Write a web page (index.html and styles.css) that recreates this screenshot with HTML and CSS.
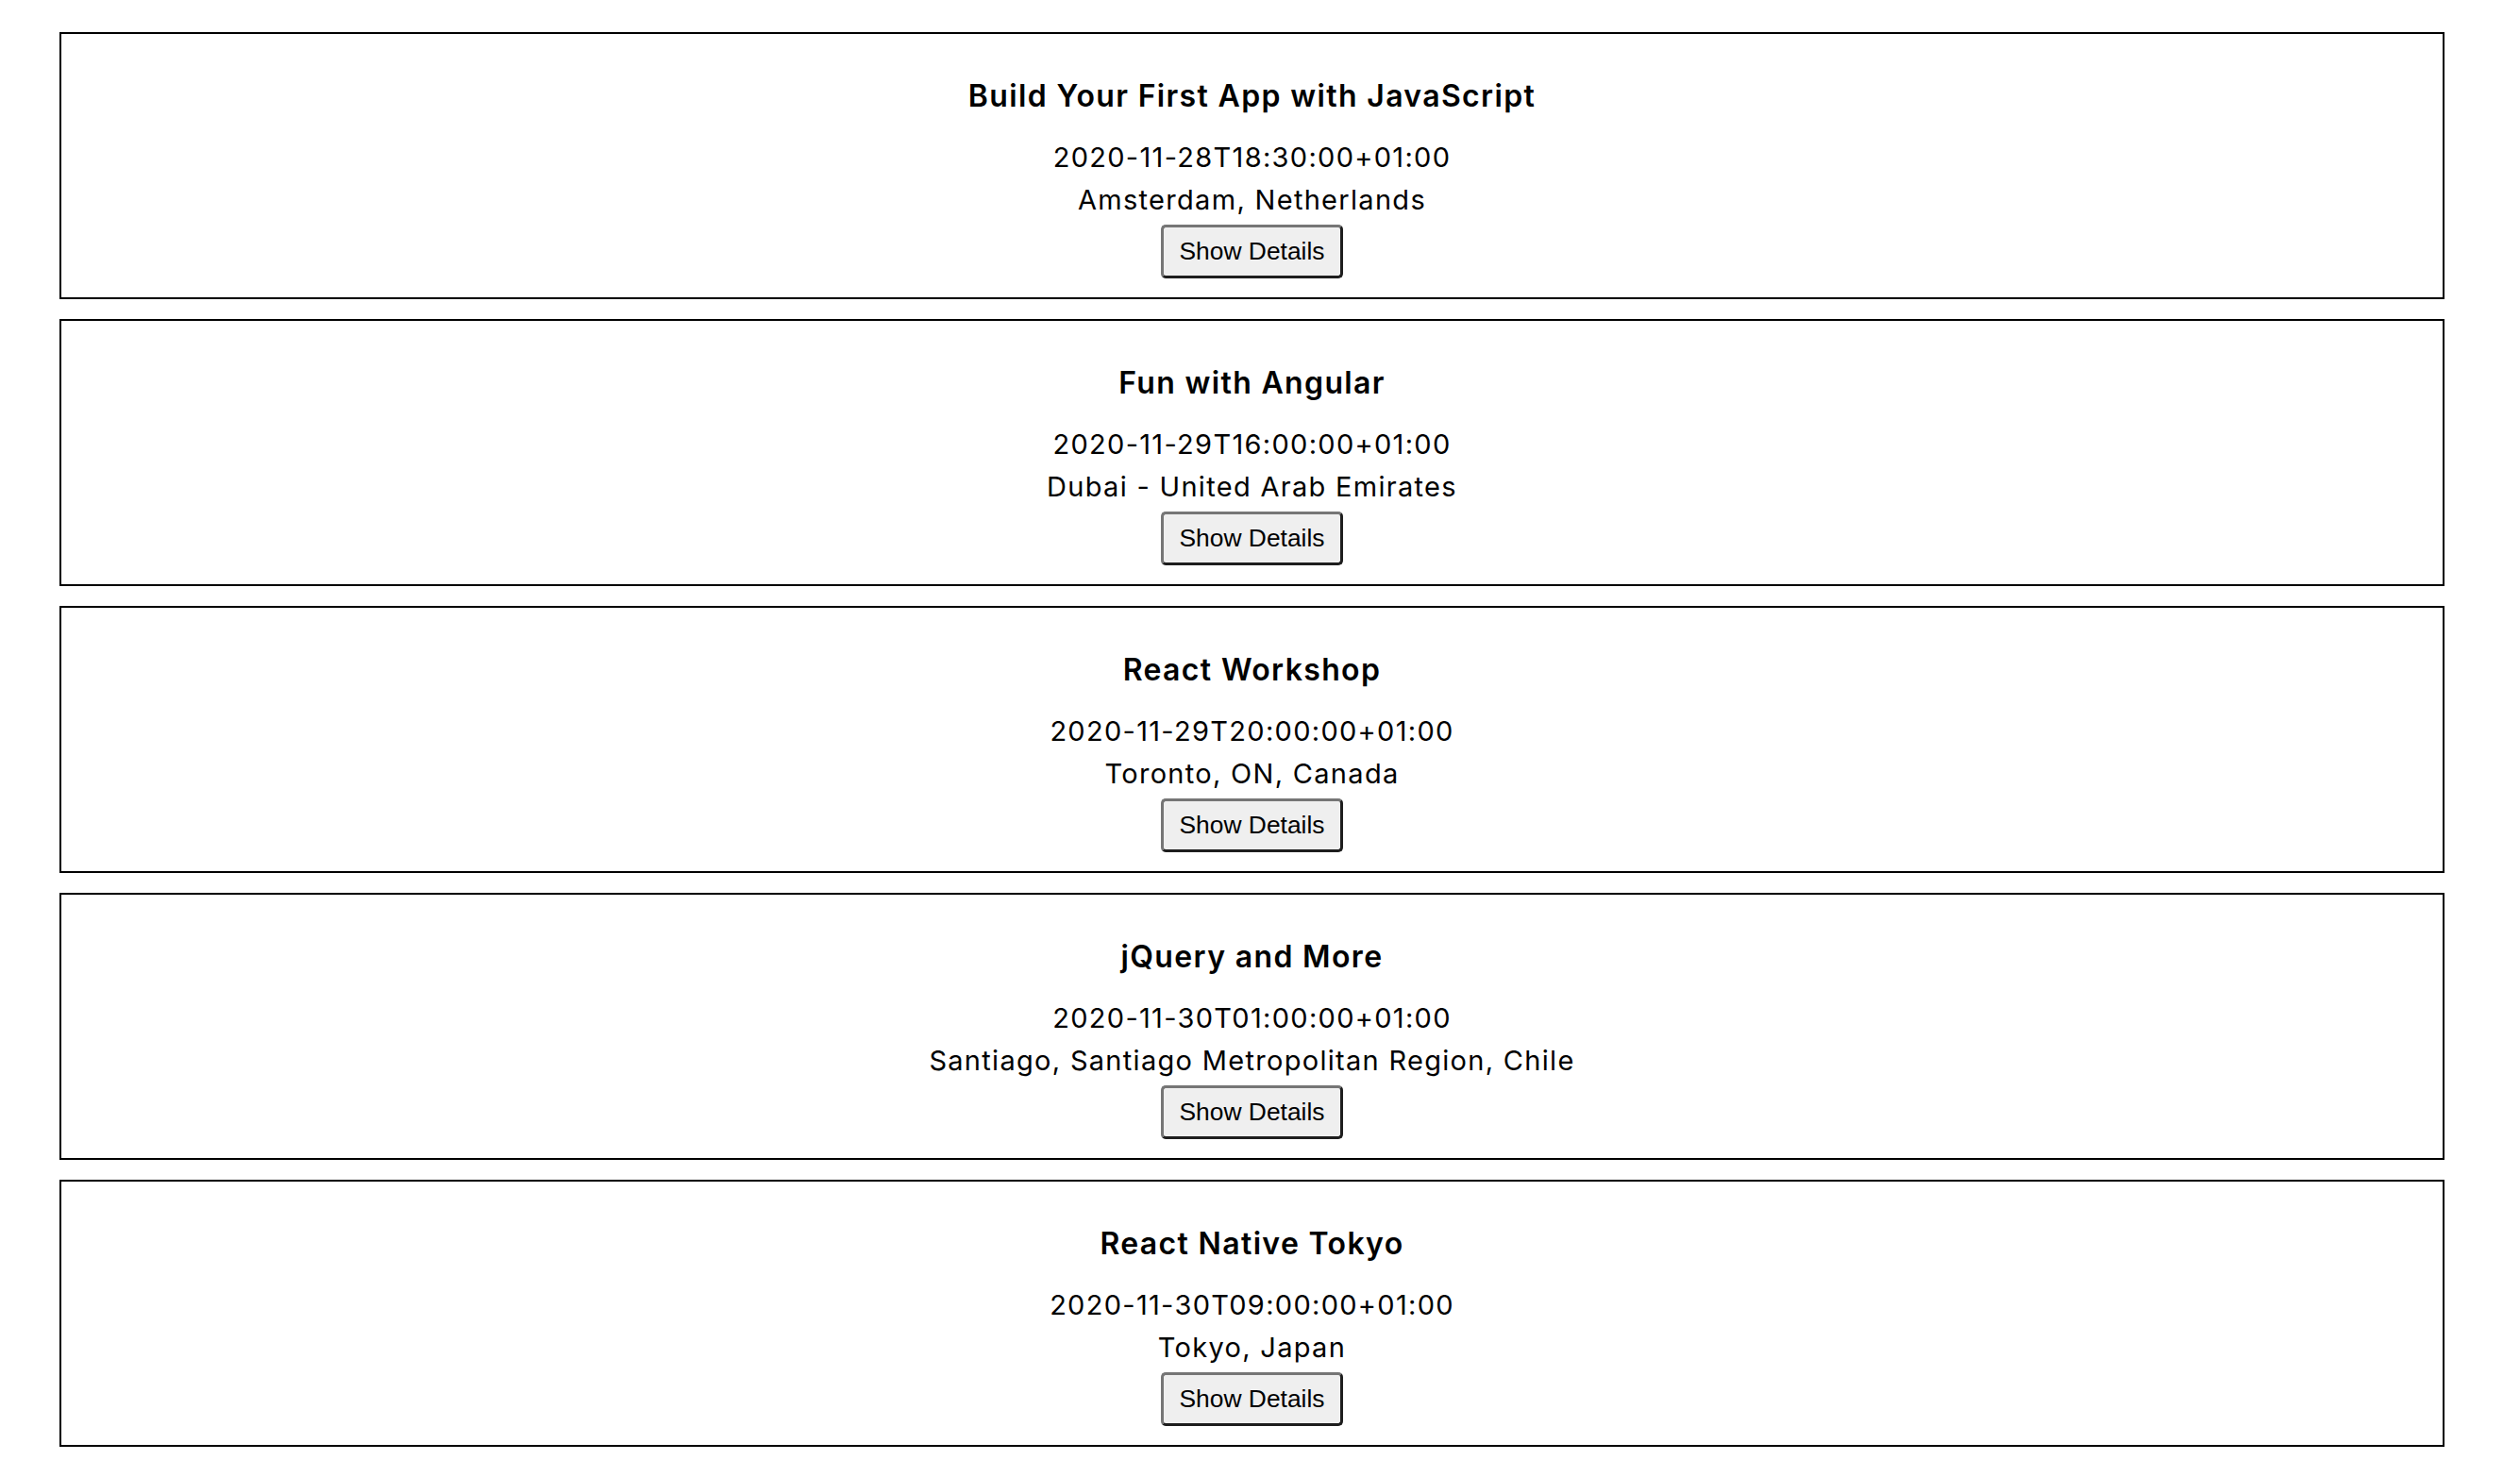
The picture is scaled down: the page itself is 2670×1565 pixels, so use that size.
FILE: index.html
```html
<!DOCTYPE html>
<html lang="en">
<head>
    <meta charset="UTF-8">
    <meta name="viewport" content="width=device-width, initial-scale=1.0">
    <title>Events</title>
    <link rel="stylesheet" href="styles.css">
</head>
<body>
    <div class="events">
        <div class="event">
            <h3 class="event-title">Build Your First App with JavaScript</h3>
            <div class="event-line">2020-11-28T18:30:00+01:00</div>
            <div class="event-line">Amsterdam, Netherlands</div>
            <button type="button" class="details-btn">Show Details</button>
        </div>
        <div class="event">
            <h3 class="event-title">Fun with Angular</h3>
            <div class="event-line">2020-11-29T16:00:00+01:00</div>
            <div class="event-line">Dubai - United Arab Emirates</div>
            <button type="button" class="details-btn">Show Details</button>
        </div>
        <div class="event">
            <h3 class="event-title">React Workshop</h3>
            <div class="event-line">2020-11-29T20:00:00+01:00</div>
            <div class="event-line">Toronto, ON, Canada</div>
            <button type="button" class="details-btn">Show Details</button>
        </div>
        <div class="event">
            <h3 class="event-title">jQuery and More</h3>
            <div class="event-line">2020-11-30T01:00:00+01:00</div>
            <div class="event-line">Santiago, Santiago Metropolitan Region, Chile</div>
            <button type="button" class="details-btn">Show Details</button>
        </div>
        <div class="event">
            <h3 class="event-title">React Native Tokyo</h3>
            <div class="event-line">2020-11-30T09:00:00+01:00</div>
            <div class="event-line">Tokyo, Japan</div>
            <button type="button" class="details-btn">Show Details</button>
        </div>
    </div>
</body>
</html>
```

FILE: styles.css
```css
body {
    font-family: Inter, "Noto Sans", sans-serif;
    color: #000;
    background-color: #fff;
    margin: 0;
    padding: 0;
}

.events {
    display: flex;
    flex-direction: column;
    gap: 21px;
    padding: 34px 80px 0 63px;
}

.event {
    display: flex;
    flex-direction: column;
    align-items: center;
    text-align: center;
    border: 2px solid #000;
    padding: 46px 0 20px;
}

.event-title {
    font-size: 32px;
    font-weight: 600;
    letter-spacing: 1.35px;
    line-height: 40px;
    margin: 0 0 22px;
}

.event-line {
    font-size: 29px;
    letter-spacing: 1.3px;
    line-height: 45px;
}

.details-btn {
    font-family: "Liberation Sans", Arial, sans-serif;
    font-size: 26.4px;
    line-height: 31px;
    color: #000;
    background-color: #efefef;
    margin-top: 4px;
    padding: 10px 16.5px;
    border: 3px solid;
    border-color: #767676 #1e1e1e #1e1e1e #767676;
    border-radius: 5px;
}
```
